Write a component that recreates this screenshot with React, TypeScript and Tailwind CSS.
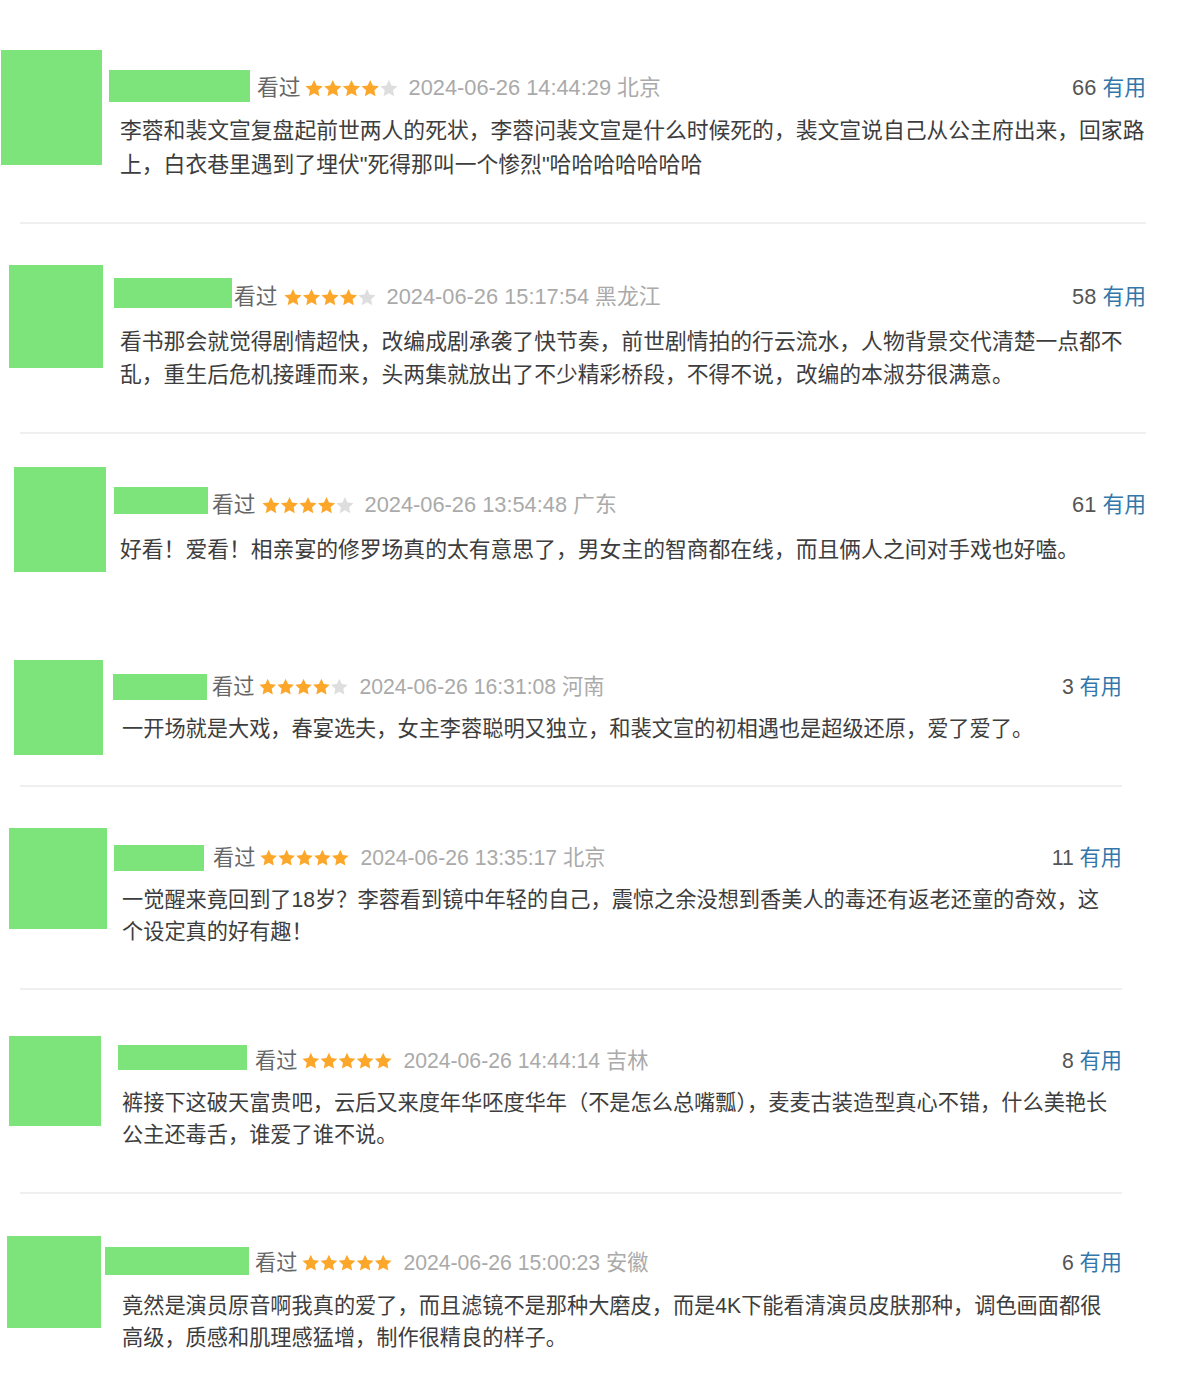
import React from "react";

// 短评列表（头像和昵称已打码）
interface Review {
  rowCls: string;
  avatarCls: string;
  contentCls: string;
  nameCls: string;
  seenCls: string;
  starsCls: string;
  rating: number;
  time: string;
  place: string;
  count: string;
  textCls: string;
  lines: string[];
  divider?: string;
}

const reviews: Review[] = [
  {
    rowCls: "h-[222px] pr-[54px] text-[21.8px]",
    avatarCls: "ml-[1px] mt-[50px] w-[101px] h-[115px]",
    contentCls: "ml-[7px] mt-[70px]",
    nameCls: "w-[141px] h-[32px] mb-[4px]",
    seenCls: "ml-[7px]",
    starsCls: "ml-[4px] w-[93px] h-[19px]",
    rating: 4,
    time: "2024-06-26 14:44:29",
    place: "北京",
    count: "66",
    textCls: "pl-[11px] mt-[8px] leading-[34px]",
    lines: [
      "李蓉和裴文宣复盘起前世两人的死状，李蓉问裴文宣是什么时候死的，裴文宣说自己从公主府出来，回家路",
      "上，白衣巷里遇到了埋伏\"死得那叫一个惨烈\"哈哈哈哈哈哈哈",
    ],
    divider: "w-[1126px]",
  },
  {
    rowCls: "h-[208px] pr-[54px] text-[21.8px]",
    avatarCls: "ml-[9px] mt-[41px] w-[94px] h-[103px]",
    contentCls: "ml-[11px] mt-[55px]",
    nameCls: "w-[118px] h-[30px] mb-[8px]",
    seenCls: "ml-[2px]",
    starsCls: "ml-[6px] w-[92px] h-[19px]",
    rating: 4,
    time: "2024-06-26 15:17:54",
    place: "黑龙江",
    count: "58",
    textCls: "pl-[6px] mt-[10px] leading-[33px]",
    lines: [
      "看书那会就觉得剧情超快，改编成剧承袭了快节奏，前世剧情拍的行云流水，人物背景交代清楚一点都不",
      "乱，重生后危机接踵而来，头两集就放出了不少精彩桥段，不得不说，改编的本淑芬很满意。",
    ],
    divider: "w-[1126px]",
  },
  {
    rowCls: "h-[186px] pr-[54px] text-[21.8px]",
    avatarCls: "ml-[14px] mt-[33px] w-[92px] h-[105px]",
    contentCls: "ml-[8px] mt-[53px]",
    nameCls: "w-[94px] h-[27px] mb-[9px]",
    seenCls: "ml-[4px]",
    starsCls: "ml-[6px] w-[92px] h-[19px]",
    rating: 4,
    time: "2024-06-26 13:54:48",
    place: "广东",
    count: "61",
    textCls: "pl-[6px] mt-[10px] leading-[33px]",
    lines: [
      "好看！爱看！相亲宴的修罗场真的太有意思了，男女主的智商都在线，而且俩人之间对手戏也好嗑。",
    ],
  },
  {
    rowCls: "h-[165px] pr-[78px] text-[21.2px]",
    avatarCls: "ml-[14px] mt-[40px] w-[89px] h-[95px]",
    contentCls: "ml-[10px] mt-[49px]",
    nameCls: "w-[94px] h-[26px]",
    seenCls: "ml-[5px]",
    starsCls: "ml-[5px] w-[89px] h-[18px]",
    rating: 4,
    time: "2024-06-26 16:31:08",
    place: "河南",
    count: "3",
    textCls: "pl-[9px] mt-[8px] leading-[32px]",
    lines: [
      "一开场就是大戏，春宴选夫，女主李蓉聪明又独立，和裴文宣的初相遇也是超级还原，爱了爱了。",
    ],
    divider: "w-[1102px]",
  },
  {
    rowCls: "h-[201px] pr-[78px] text-[21.2px]",
    avatarCls: "ml-[9px] mt-[41px] w-[98px] h-[101px]",
    contentCls: "ml-[7px] mt-[53px]",
    nameCls: "w-[90px] h-[26px]",
    seenCls: "ml-[9px]",
    starsCls: "ml-[5px] w-[89px] h-[18px]",
    rating: 5,
    time: "2024-06-26 13:35:17",
    place: "北京",
    count: "11",
    textCls: "pl-[8px] mt-[8px] leading-[32px]",
    lines: [
      "一觉醒来竟回到了18岁？李蓉看到镜中年轻的自己，震惊之余没想到香美人的毒还有返老还童的奇效，这",
      "个设定真的好有趣！",
    ],
    divider: "w-[1102px]",
  },
  {
    rowCls: "h-[202px] pr-[78px] text-[21.2px]",
    avatarCls: "ml-[9px] mt-[46px] w-[92px] h-[90px]",
    contentCls: "ml-[17px] mt-[53px]",
    nameCls: "w-[129px] h-[25px] mb-[7px]",
    seenCls: "ml-[8px]",
    starsCls: "ml-[5px] w-[90px] h-[18px]",
    rating: 5,
    time: "2024-06-26 14:44:14",
    place: "吉林",
    count: "8",
    textCls: "pl-[4px] mt-[8px] leading-[32px]",
    lines: [
      "裤接下这破天富贵吧，云后又来度年华呸度华年（不是怎么总嘴瓢），麦麦古装造型真心不错，什么美艳长",
      "公主还毒舌，谁爱了谁不说。",
    ],
    divider: "w-[1102px]",
  },
  {
    rowCls: "h-[206px] pr-[78px] text-[21.2px]",
    avatarCls: "ml-[7px] mt-[42px] w-[94px] h-[92px]",
    contentCls: "ml-[4px] mt-[51px]",
    nameCls: "w-[144px] h-[28px] mb-[4px]",
    seenCls: "ml-[6px]",
    starsCls: "ml-[5px] w-[90px] h-[18px]",
    rating: 5,
    time: "2024-06-26 15:00:23",
    place: "安徽",
    count: "6",
    textCls: "pl-[17px] mt-[9px] leading-[32px]",
    lines: [
      "竟然是演员原音啊我真的爱了，而且滤镜不是那种大磨皮，而是4K下能看清演员皮肤那种，调色画面都很",
      "高级，质感和肌理感猛增，制作很精良的样子。",
    ],
  },
];

// 胖一点的五角星
const STAR =
  "M9 0.5L11.53 6.02L17.56 6.72L13.09 10.83L14.29 16.78L9 13.8L3.71 16.78L4.91 10.83L0.44 6.72L6.47 6.02Z";

function Stars({ rating, cls }: { rating: number; cls: string }) {
  return (
    <svg viewBox="0 0 92 18" className={`shrink-0 ${cls}`}>
      {[0, 1, 2, 3, 4].map((i) => (
        <path
          key={i}
          d={STAR}
          transform={`translate(${i * 18.5} 0)`}
          fill={i < rating ? "#fca72a" : "#dedede"}
        />
      ))}
    </svg>
  );
}

function ReviewRow({ r }: { r: Review }) {
  return (
    <>
      <div className={`flex items-start ${r.rowCls}`}>
        <div className={`shrink-0 bg-[#7de37b] ${r.avatarCls}`} />
        <div className={`flex-1 min-w-0 ${r.contentCls}`}>
          <div className="flex items-center h-[36px] whitespace-nowrap">
            <div className={`shrink-0 bg-[#7de37b] ${r.nameCls}`} />
            <span className={`text-[#666666] ${r.seenCls}`}>看过</span>
            <Stars rating={r.rating} cls={r.starsCls} />
            <span className="ml-[11px] text-[#aaaaaa]">
              {r.time} {r.place}
            </span>
            <span className="ml-auto text-[#555555]">
              {r.count} <span className="text-[#3377aa]">有用</span>
            </span>
          </div>
          <div className={`text-[#3d3d3d] whitespace-nowrap ${r.textCls}`}>
            {r.lines.map((line, i) => (
              <p key={i}>{line}</p>
            ))}
          </div>
        </div>
      </div>
      {r.divider && <div className={`ml-[20px] h-[2px] bg-[#efefef] ${r.divider}`} />}
    </>
  );
}

export default function App() {
  return (
    <div className="w-[1200px] h-[1400px] overflow-hidden bg-white font-['Liberation_Sans','Noto_Sans_CJK_SC',sans-serif]">
      {reviews.map((r, i) => (
        <ReviewRow key={i} r={r} />
      ))}
    </div>
  );
}
